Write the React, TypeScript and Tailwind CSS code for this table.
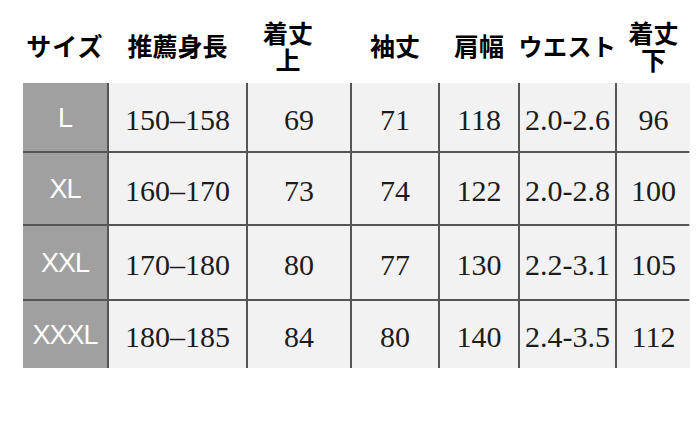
const columns = 'grid-cols-[84px_137px_102px_86px_78px_95px_73px]'

const rows = [
  { size: 'L', height: '150–158', top: '69', sleeve: '71', shoulder: '118', waist: '2.0-2.6', bottom: '96', h: 'h-[68px]' },
  { size: 'XL', height: '160–170', top: '73', sleeve: '74', shoulder: '122', waist: '2.0-2.8', bottom: '100', h: 'h-[71px]' },
  { size: 'XXL', height: '170–180', top: '80', sleeve: '77', shoulder: '130', waist: '2.2-3.1', bottom: '105', h: 'h-[73px]' },
  { size: 'XXXL', height: '180–185', top: '84', sleeve: '80', shoulder: '140', waist: '2.4-3.5', bottom: '112', h: 'h-[67px]' },
]

function Cell({ children, h }: { children: React.ReactNode; h: string }) {
  return (
    <div
      className={`${h} flex items-center justify-center bg-[#f2f2f2] pt-[4px] text-[30px] text-[#1c1c1c] font-['Liberation_Serif',serif] whitespace-nowrap`}
    >
      {children}
    </div>
  )
}

export default function App() {
  return (
    <div className="w-[700px] h-[433px] bg-white pl-[23px] pt-[8px] font-['Noto_Sans_CJK_JP',sans-serif]">
      {/* header */}
      <div className={`grid ${columns} gap-x-[2px] h-[75px] text-[25px] font-bold leading-[27px] text-black whitespace-nowrap`}>
        <div className="flex items-center justify-center tracking-[1px]">サイズ</div>
        <div className="flex items-center justify-center">推薦身長</div>
        <div className="flex flex-col items-center justify-center pr-[22px]">
          <span>着丈</span>
          <span>上</span>
        </div>
        <div className="flex items-center justify-center">袖丈</div>
        <div className="flex items-center justify-center">肩幅</div>
        <div className="flex items-center justify-center overflow-visible">
          <span className="text-[24px] tracking-[0.5px]">ウエスト</span>
        </div>
        <div className="flex flex-col items-center justify-center">
          <span>着丈</span>
          <span>下</span>
        </div>
      </div>

      {/* table */}
      <div className={`grid ${columns} gap-[2px] w-[667px] bg-[#555555] border-r border-[#c8c8c8]`}>
        {rows.map((r) => (
          <div key={r.size} className="contents">
            <div
              className={`${r.h} flex items-center justify-center bg-[#a0a0a0] pt-[2px] text-[27px] text-white font-['Liberation_Sans',sans-serif] tracking-[-1px]`}
            >
              {r.size}
            </div>
            <Cell h={r.h}>{r.height}</Cell>
            <Cell h={r.h}>{r.top}</Cell>
            <Cell h={r.h}>{r.sleeve}</Cell>
            <Cell h={r.h}>{r.shoulder}</Cell>
            <Cell h={r.h}>{r.waist}</Cell>
            <Cell h={r.h}>{r.bottom}</Cell>
          </div>
        ))}
      </div>
    </div>
  )
}
